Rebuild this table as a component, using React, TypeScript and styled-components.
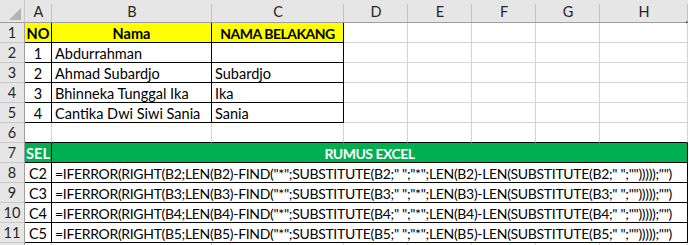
import React from "react";
import styled, { createGlobalStyle } from "styled-components";

const Global = createGlobalStyle`
  html, body { margin: 0; padding: 0; background: #ffffff; }
  body { font-family: Lato, "Liberation Sans", sans-serif; }
`;

const COLUMN_WIDTHS = [25, 27, 160, 132, 64, 64, 64, 64, 88];
const LETTERS = ["A", "B", "C", "D", "E", "F", "G", "H"];

const Sheet = styled.div`
  display: grid;
  grid-template-columns: ${COLUMN_WIDTHS.map((w) => `${w}px`).join(" ")};
  grid-template-rows: 23px;
  grid-auto-rows: 20px;
  width: 689px;
  height: 245px;
  overflow: hidden;
  background: #ffffff;
`;

const HeadBase = styled.div`
  box-sizing: border-box;
  display: flex;
  align-items: center;
  justify-content: center;
  background: #e6e6e6;
  color: #262626;
  font-size: 14.5px;
`;

const Corner = styled(HeadBase)`
  border-right: 1px solid #c8c8c8;
  border-bottom: 1px solid #9e9e9e;
  justify-content: flex-end;
  align-items: flex-end;
  padding: 0 3px 2px 0;
`;

const ColHead = styled(HeadBase)<{ $active?: boolean }>`
  position: relative;
  border-bottom: 1px solid #9e9e9e;
  padding-top: 1px;

  &::after {
    content: "";
    position: absolute;
    right: 0;
    top: 4px;
    bottom: 0;
    width: 1px;
    background: #c4c4c4;
  }

  &::before {
    content: "";
    display: ${(p) => (p.$active ? "block" : "none")};
    position: absolute;
    right: 0;
    bottom: -1px;
    width: 2px;
    height: 2px;
    background: #217346;
  }
`;

const RowHead = styled(HeadBase)`
  border-right: 1px solid #9e9e9e;
  border-bottom: 1px solid #c8c8c8;
`;

type CellProps = {
  $fill?: string;
  $ink?: string;
  $bold?: boolean;
  $center?: boolean;
  $edgeR?: boolean;
  $edgeB?: boolean;
  $span?: number;
};

const Cell = styled.div<CellProps>`
  box-sizing: border-box;
  display: flex;
  align-items: center;
  justify-content: ${(p) => (p.$center ? "center" : "flex-start")};
  padding: 1px 3px 0;
  grid-column: ${(p) => (p.$span ? `span ${p.$span}` : "auto")};
  background: ${(p) => p.$fill ?? "#ffffff"};
  color: ${(p) => p.$ink ?? "#000000"};
  font-weight: ${(p) => (p.$bold ? 700 : 400)};
  font-size: 14.5px;
  white-space: nowrap;
  overflow: hidden;
  border-right: 1px solid ${(p) => (p.$edgeR ? "#000000" : "#d4d4d4")};
  border-bottom: 1px solid ${(p) => (p.$edgeB ? "#000000" : "#d4d4d4")};
`;

/* Upper-case headings are set a little tighter than body text. */
const Caps = styled.span`
  font-size: 14px;
  letter-spacing: -0.5px;
`;

/* Long formula strings, tightened so they fit the merged cell. */
const Formula = styled.span`
  font-size: 14px;
  letter-spacing: -0.32px;
`;

const CornerMark = () => (
  <svg width="12" height="12" viewBox="0 0 12 12" aria-hidden="true">
    <polygon points="0,12 12,12 12,0" fill="#b4b4b4" />
  </svg>
);

const YELLOW = "#ffff00";
const GREEN = "#00b050";

const people = [
  { no: "1", name: "Abdurrahman", last: "" },
  { no: "2", name: "Ahmad Subardjo", last: "Subardjo" },
  { no: "3", name: "Bhinneka Tunggal Ika", last: "Ika" },
  { no: "4", name: "Cantika Dwi Siwi Sania", last: "Sania" },
];

const formulas = ["B2", "B3", "B4", "B5"].map((ref, i) => ({
  cell: `C${i + 2}`,
  text: `=IFERROR(RIGHT(${ref};LEN(${ref})-FIND("*";SUBSTITUTE(${ref};" ";"*";LEN(${ref})-LEN(SUBSTITUTE(${ref};" ";"")))));"")`,
}));

const EmptyTail = ({ from, edgeB }: { from: number; edgeB?: boolean }) => (
  <>
    {LETTERS.slice(from).map((l) => (
      <Cell key={l} $edgeB={edgeB} />
    ))}
  </>
);

export default function App() {
  return (
    <>
      <Global />
      <Sheet>
        <Corner>
          <CornerMark />
        </Corner>
        {LETTERS.map((l) => (
          <ColHead key={l} $active={l === "H"}>
            {l}
          </ColHead>
        ))}

        <RowHead>1</RowHead>
        <Cell $fill={YELLOW} $bold $center $edgeR $edgeB>NO</Cell>
        <Cell $fill={YELLOW} $bold $center $edgeR $edgeB>Nama</Cell>
        <Cell $fill={YELLOW} $bold $center $edgeR $edgeB>
          <Caps>NAMA BELAKANG</Caps>
        </Cell>
        <EmptyTail from={3} />

        {people.map((p, i) => (
          <React.Fragment key={p.no}>
            <RowHead>{i + 2}</RowHead>
            <Cell $center $edgeR $edgeB>{p.no}</Cell>
            <Cell $edgeR $edgeB>{p.name}</Cell>
            <Cell $edgeR $edgeB>{p.last}</Cell>
            <EmptyTail from={3} />
          </React.Fragment>
        ))}

        <RowHead>6</RowHead>
        <EmptyTail from={0} edgeB />

        <RowHead>7</RowHead>
        <Cell $fill={GREEN} $ink="#ffffff" $bold $center $edgeR $edgeB>SEL</Cell>
        <Cell $fill={GREEN} $ink="#ffffff" $bold $center $edgeR $edgeB $span={7}>
          <Caps>RUMUS EXCEL</Caps>
        </Cell>

        {formulas.map((f, i) => (
          <React.Fragment key={f.cell}>
            <RowHead>{i + 8}</RowHead>
            <Cell $center $edgeR $edgeB>{f.cell}</Cell>
            <Cell $edgeR $edgeB $span={7}>
              <Formula>{f.text}</Formula>
            </Cell>
          </React.Fragment>
        ))}

        {/* Row 12 sits below the fold: only its top edge shows. */}
        <RowHead />
        <EmptyTail from={0} />
      </Sheet>
    </>
  );
}
